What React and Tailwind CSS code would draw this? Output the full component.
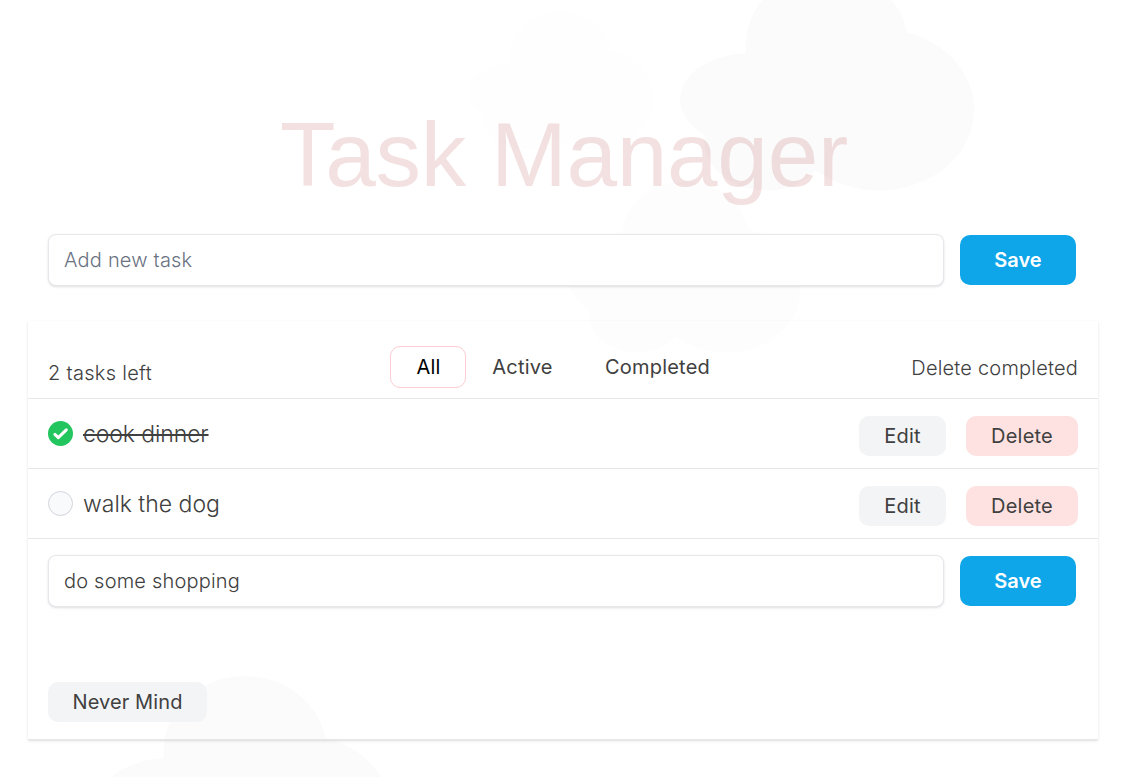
function CloudShape() {
  return (
    <>
      <ellipse cx="827" cy="46" rx="81.5" ry="75" />
      <ellipse cx="751" cy="99.5" rx="71" ry="46.5" />
      <ellipse cx="879" cy="109.5" rx="95" ry="81" />
      <ellipse cx="766" cy="140" rx="62" ry="50.5" />
    </>
  );
}

function Clouds() {
  return (
    <svg className="pointer-events-none absolute inset-0 -z-10" width="1123" height="777" aria-hidden="true">
      <g fill="#fbfbfb"><CloudShape /></g>
      <g fill="#fefefe" transform="translate(42 30) scale(.627)"><CloudShape /></g>
      <g fill="#fdfdfd" transform="translate(36 204) scale(.785 .78)"><CloudShape /></g>
      <g fill="#fbfbfb" transform="translate(-582 705)"><CloudShape /></g>
    </svg>
  );
}

function TaskForm({ value }) {
  return (
    <form className="flex items-center gap-4" onSubmit={(e) => e.preventDefault()}>
      <input
        className="h-[52px] w-[896px] rounded-lg border border-gray-200 bg-white px-[15px] pb-px text-[20px] font-light tracking-[0.2px] text-neutral-700 shadow placeholder:text-gray-500 outline-none"
        placeholder="Add new task"
        defaultValue={value}
      />
      <button className="h-[50px] w-[116px] rounded-[10px] bg-[#0ea5e9] text-[20px] font-semibold text-white">Save</button>
    </form>
  );
}

function Check({ done }) {
  if (!done) return <span className="size-[25px] rounded-full border border-gray-300 bg-gray-50" />;
  return (
    <svg width="25" height="25" viewBox="0 0 25 25">
      <circle cx="12.5" cy="12.5" r="12.5" fill="#22c55e" />
      <path d="M6.9 13.3 L10.3 16.6 L18.3 8.9" fill="none" stroke="#fff" strokeWidth="3" strokeLinecap="round" strokeLinejoin="round" />
    </svg>
  );
}

function Task({ name, done }) {
  return (
    <li className="flex h-[70px] items-center border-b border-gray-200 px-5">
      <Check done={done} />
      <span className={done ? "mt-0.5 ml-2.5 text-[23px] font-light tracking-[-0.1px] line-through" : "mt-0.5 ml-2.5 text-[23px] font-light"}>{name}</span>
      <div className="mt-[5px] ml-auto flex gap-5">
        <button className="h-10 w-[87px] rounded-[10px] bg-gray-100 text-[20px] tracking-[0.2px]">Edit</button>
        <button className="h-10 w-[112px] rounded-[10px] bg-[#fee2e2] text-[20px] tracking-[0.2px]">Delete</button>
      </div>
    </li>
  );
}

export default function App() {
  return (
    <div className="relative isolate h-[777px] overflow-hidden bg-white font-['Inter',sans-serif] text-neutral-700">
      <Clouds />
      <h1 className="pt-[103px] pl-[5px] text-center font-['Liberation_Sans',Arial,sans-serif] text-[91px] leading-[104px] tracking-[-0.3px] text-[rgba(175,47,47,0.15)]">Task Manager</h1>
      <div className="mt-[27px] ml-12">
        <TaskForm />
      </div>
      <main className="mt-[35px] ml-7 h-[419px] w-[1070px] border-b border-gray-200 shadow">
        <header className="flex h-[78px] justify-between border-b border-gray-200 px-5 text-[20px]">
          <p className="w-[342px] pt-[37px] font-light tracking-[0.3px]">2 tasks left</p>
          <nav className="flex flex-1 pt-[25px] tracking-[0.2px]">
            <button className="h-[42px] w-[76px] rounded-[10px] border border-[#fecdd3] pl-px text-black">All</button>
            <button className="h-[42px] w-[113px]">Active</button>
            <button className="h-[42px] w-[157px]">Completed</button>
          </nav>
          <button className="h-[94px] font-light tracking-[0.2px]">Delete completed</button>
        </header>
        <ul>
          <Task name="cook dinner" done />
          <Task name="walk the dog" />
        </ul>
        <div className="px-5 pt-4">
          <TaskForm value="do some shopping" />
          <button className="mt-[75px] h-10 w-[159px] rounded-[10px] bg-gray-100 text-[20px] tracking-[0.1px]">Never Mind</button>
        </div>
      </main>
    </div>
  );
}
